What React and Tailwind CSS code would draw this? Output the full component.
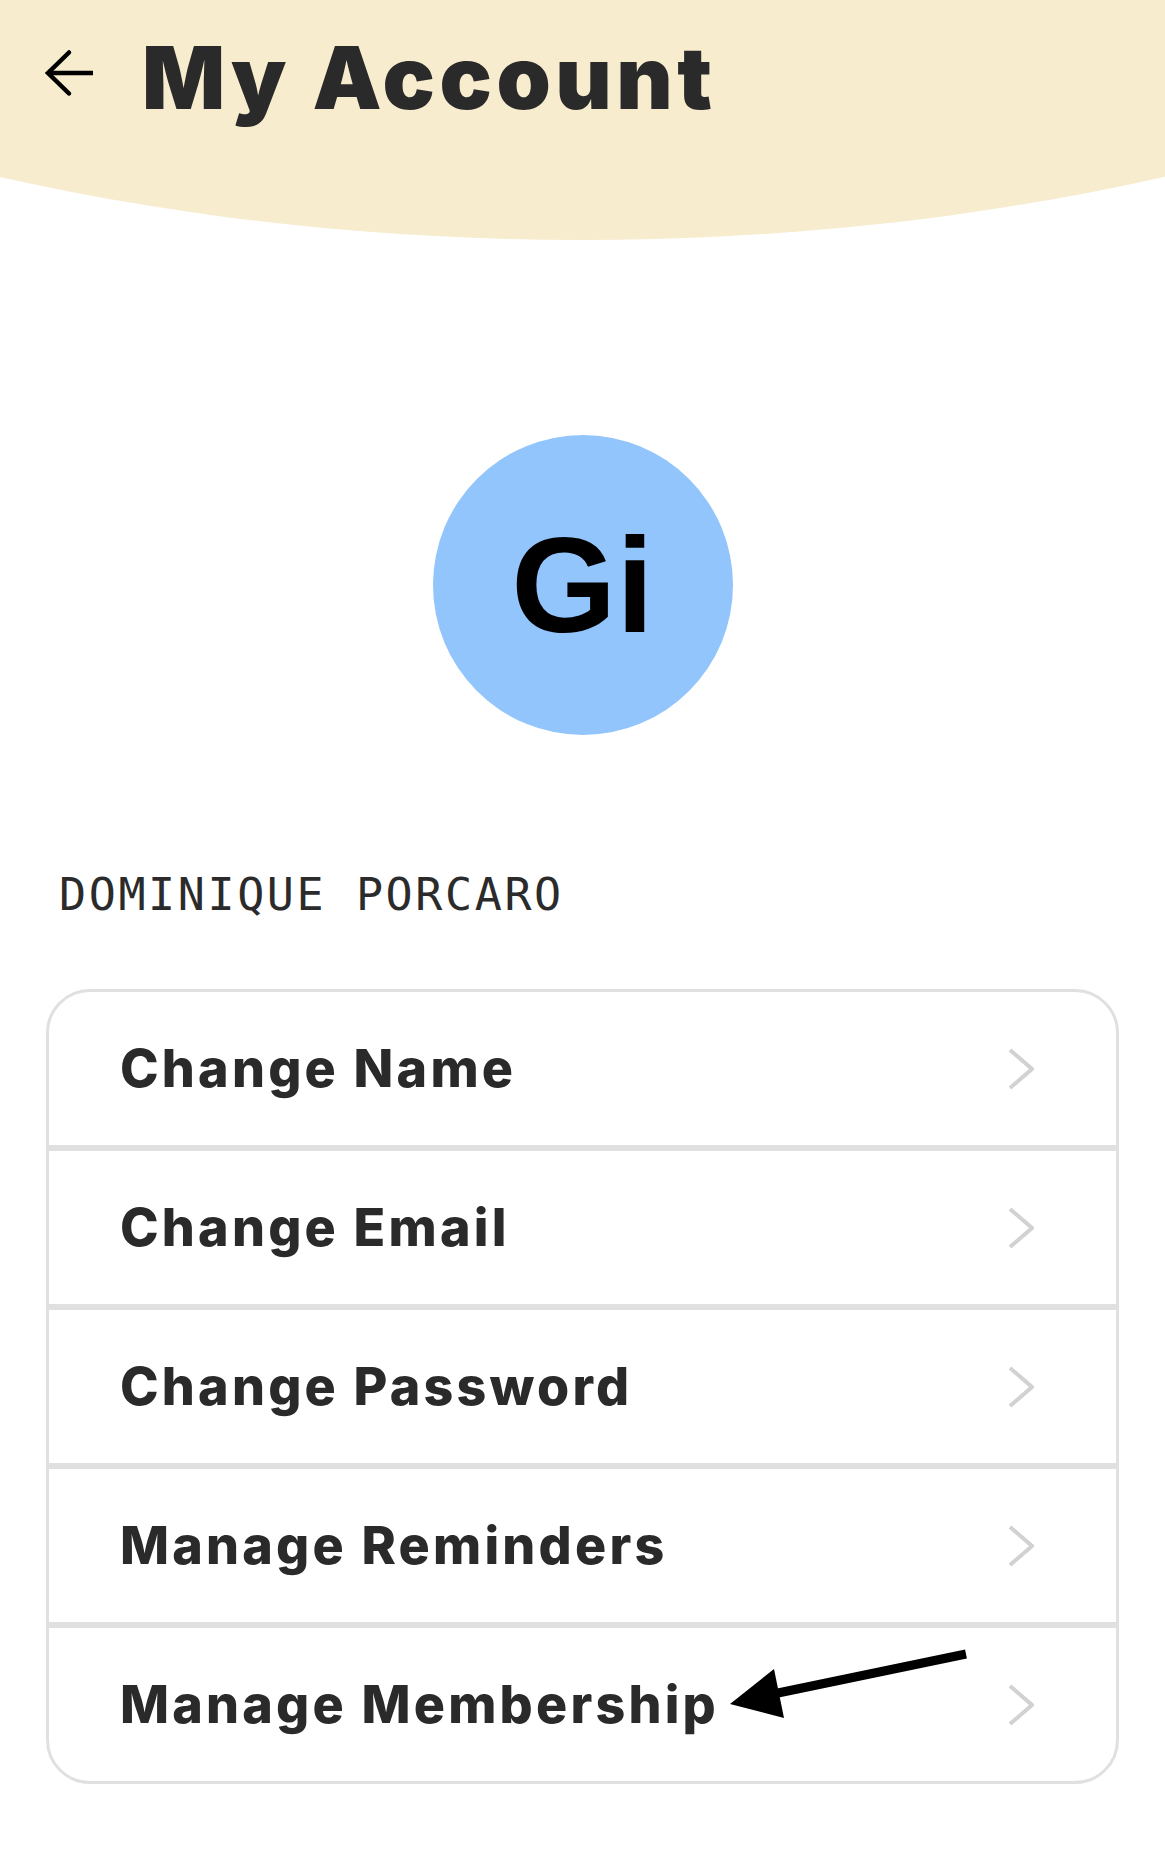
import React from "react";

const rows = [
  "Change Name",
  "Change Email",
  "Change Password",
  "Manage Reminders",
  "Manage Membership",
];

function Chevron() {
  return (
    <svg width="26" height="42" viewBox="0 0 26 42" className="shrink-0">
      <polyline
        points="2,2 24,21 2,40"
        fill="none"
        stroke="#d2d2d2"
        strokeWidth="4"
      />
    </svg>
  );
}

export default function App() {
  return (
    <div className="relative w-[1165px] min-h-[1855px] bg-white overflow-hidden">
      {/* header */}
      <div className="relative h-[240px]">
        <div className="absolute left-[-918px] top-[-1370px] w-[3000px] h-[1610px] rounded-[50%] bg-[#f7ecce]" />
        <div className="relative flex items-start pt-[34px] pl-[44px]">
          <svg width="52" height="48" viewBox="0 0 52 48" className="mt-[15px] shrink-0">
            <line x1="4" y1="24" x2="49" y2="24" stroke="#000" strokeWidth="4.5" />
            <polyline
              points="25,3.5 4,24 25,44.5"
              fill="none"
              stroke="#000"
              strokeWidth="4.5"
              strokeLinecap="round"
              strokeLinejoin="miter"
            />
          </svg>
          <h1
            className="ml-[46px] text-[87px] leading-none font-black text-[#2a2a2a] tracking-[4.5px]"
            style={{ fontFamily: "Inter, 'Noto Sans', sans-serif" }}
          >
            My Account
          </h1>
        </div>
      </div>

      {/* avatar */}
      <div className="flex justify-center mt-[195px]">
        <div className="w-[300px] h-[300px] rounded-full bg-[#91c5fc] flex items-center justify-center">
          <span
            className="text-[135px] leading-none font-bold text-black"
            style={{ fontFamily: "'Liberation Sans', Arial, sans-serif" }}
          >
            Gi
          </span>
        </div>
      </div>

      {/* name */}
      <div
        className="mt-[137px] pl-[59px] text-[45px] leading-none text-[#2b2b2b] tracking-[2.6px]"
        style={{ fontFamily: "'DejaVu Sans Mono', monospace" }}
      >
        DOMINIQUE PORCARO
      </div>

      {/* card */}
      <div className="mx-[46px] mt-[72px] border-[3px] border-[#e0e0e0] rounded-[44px] overflow-hidden">
        {rows.map((label, i) => (
          <div
            key={label}
            className={
              "relative flex items-center justify-between pl-[71px] pr-[82px] " +
              (i > 0 ? "h-[159px] border-t-[6px] border-[#e0e0e0]" : "h-[153px]")
            }
          >
            <span
              className="text-[52px] leading-none font-extrabold text-[#2a2a2a] tracking-[3.2px]"
              style={{ fontFamily: "Inter, 'Noto Sans', sans-serif" }}
            >
              {label}
            </span>
            <Chevron />
            {i === 4 && (
              <svg
                width="255"
                height="85"
                viewBox="0 0 255 85"
                className="absolute left-[671px] top-[13px]"
              >
                <line x1="58" y1="52" x2="246" y2="13" stroke="#000" strokeWidth="9" />
                <polygon points="10,63 54,28 64,77" fill="#000" />
              </svg>
            )}
          </div>
        ))}
      </div>
    </div>
  );
}
